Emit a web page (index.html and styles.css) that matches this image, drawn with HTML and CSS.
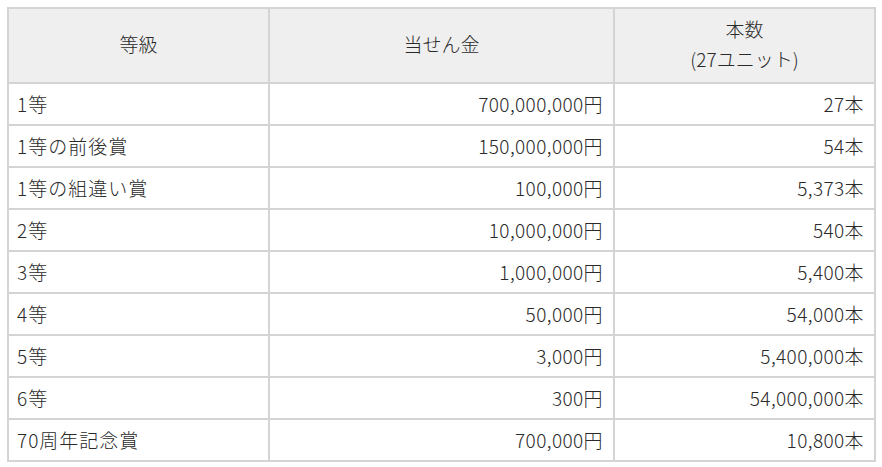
FILE: index.html
```html
<!DOCTYPE html>
<html lang="ja">
<head>
<meta charset="utf-8">
<link rel="stylesheet" href="styles.css">
</head>
<body>
<table class="prize">
  <colgroup>
    <col class="c1"><col class="c2"><col class="c3">
  </colgroup>
  <thead>
    <tr><th>等級</th><th>当せん金</th><th>本数<br>(27ユニット)</th></tr>
  </thead>
  <tbody>
    <tr><td class="label">1等</td><td class="num">700,000,000円</td><td class="num">27本</td></tr>
    <tr><td class="label">1等の前後賞</td><td class="num">150,000,000円</td><td class="num">54本</td></tr>
    <tr><td class="label">1等の組違い賞</td><td class="num">100,000円</td><td class="num">5,373本</td></tr>
    <tr><td class="label">2等</td><td class="num">10,000,000円</td><td class="num">540本</td></tr>
    <tr><td class="label">3等</td><td class="num">1,000,000円</td><td class="num">5,400本</td></tr>
    <tr><td class="label">4等</td><td class="num">50,000円</td><td class="num">54,000本</td></tr>
    <tr><td class="label">5等</td><td class="num">3,000円</td><td class="num">5,400,000本</td></tr>
    <tr><td class="label">6等</td><td class="num">300円</td><td class="num">54,000,000本</td></tr>
    <tr><td class="label">70周年記念賞</td><td class="num">700,000円</td><td class="num">10,800本</td></tr>
  </tbody>
</table>
</body>
</html>
```
FILE: styles.css
```css
html, body {
  margin: 0;
  background: #fff;
}
body {
  padding: 7px 8px 0 7px;
  font-family: "Noto Sans CJK JP", "Noto Sans", sans-serif;
  color: #2a2a2a;
}
.prize {
  width: 867px;
  border-collapse: collapse;
  table-layout: fixed;
  font-size: 19px;
  font-weight: 300;
}
.c1 { width: 261px; }
.c2 { width: 345px; }
.c3 { width: 261px; }
.prize th, .prize td {
  border: 2px solid #d4d4d4;
  line-height: 30px;
  padding: 5px 10px 5px 8px;
  font-weight: 300;
}
.prize th {
  background: #efefef;
  text-align: center;
  padding: 5px 10px 8px;
}
.prize td {
  text-align: left;
  white-space: nowrap;
}
.prize td.label {
  letter-spacing: 1px;
}
.prize td.num {
  text-align: right;
  letter-spacing: 0.4px;
}
```
